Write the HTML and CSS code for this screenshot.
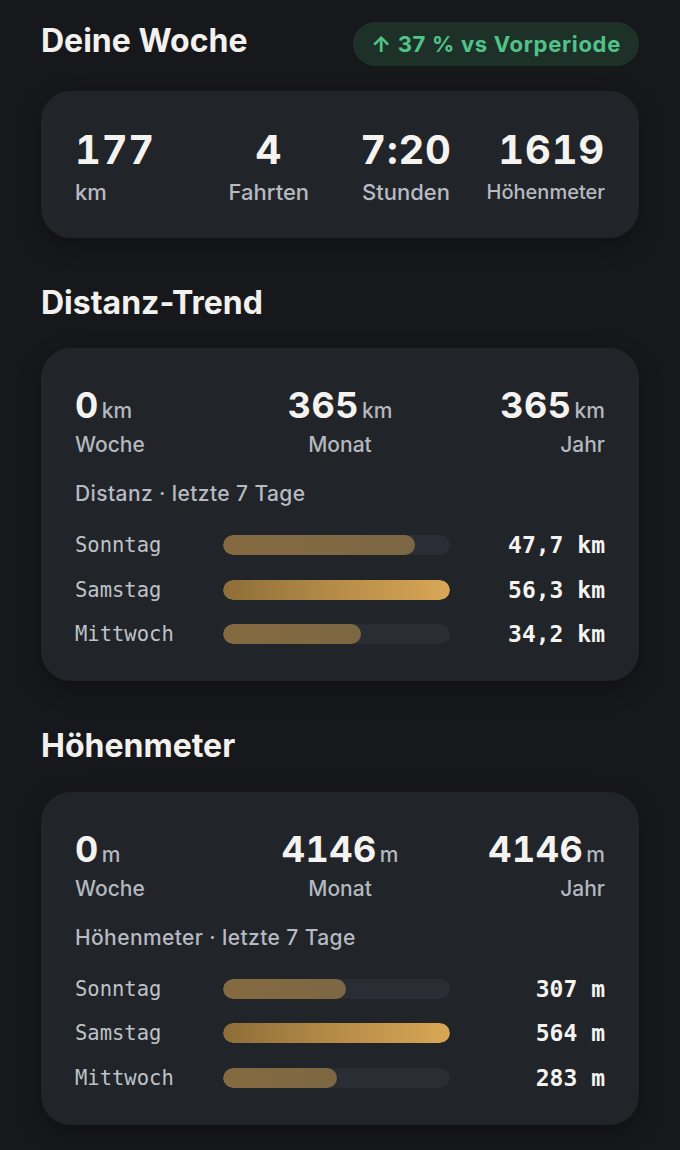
FILE: index.html
```html
<!DOCTYPE html>
<html lang="de">
<head>
    <meta charset="UTF-8">
    <meta name="viewport" content="width=device-width, initial-scale=1.0">
    <title>Statistik</title>
    <link rel="stylesheet" href="styles.css">
</head>
<body>
    <main class="page">
        <!-- Wochenübersicht -->
        <div class="section-head">
            <h2>Deine Woche</h2>
            <span class="trend-badge">↑ 37 % vs Vorperiode</span>
        </div>
        <div class="card week-card">
            <div class="week-stat">
                <div class="big">177</div>
                <div class="caption">km</div>
            </div>
            <div class="week-stat">
                <div class="big">4</div>
                <div class="caption">Fahrten</div>
            </div>
            <div class="week-stat">
                <div class="big">7:20</div>
                <div class="caption">Stunden</div>
            </div>
            <div class="week-stat">
                <div class="big">1619</div>
                <div class="caption small">Höhenmeter</div>
            </div>
        </div>

        <!-- Distanz -->
        <h2 class="section-title">Distanz-Trend</h2>
        <div class="card">
            <div class="totals">
                <div class="total">
                    <div class="total-value">0<span class="unit">km</span></div>
                    <div class="total-label">Woche</div>
                </div>
                <div class="total">
                    <div class="total-value">365<span class="unit">km</span></div>
                    <div class="total-label">Monat</div>
                </div>
                <div class="total">
                    <div class="total-value">365<span class="unit">km</span></div>
                    <div class="total-label">Jahr</div>
                </div>
            </div>
            <div class="chart-title">Distanz · letzte 7 Tage</div>
            <div class="bars">
                <div class="bar-row">
                    <span class="day">Sonntag</span>
                    <div class="track"><div class="fill" style="width: 84.7%"></div></div>
                    <span class="amount">47,7 km</span>
                </div>
                <div class="bar-row">
                    <span class="day">Samstag</span>
                    <div class="track"><div class="fill top" style="width: 100%"></div></div>
                    <span class="amount">56,3 km</span>
                </div>
                <div class="bar-row">
                    <span class="day">Mittwoch</span>
                    <div class="track"><div class="fill" style="width: 60.7%"></div></div>
                    <span class="amount">34,2 km</span>
                </div>
            </div>
        </div>

        <!-- Höhenmeter -->
        <h2 class="section-title">Höhenmeter</h2>
        <div class="card">
            <div class="totals">
                <div class="total">
                    <div class="total-value">0<span class="unit">m</span></div>
                    <div class="total-label">Woche</div>
                </div>
                <div class="total">
                    <div class="total-value">4146<span class="unit">m</span></div>
                    <div class="total-label">Monat</div>
                </div>
                <div class="total">
                    <div class="total-value">4146<span class="unit">m</span></div>
                    <div class="total-label">Jahr</div>
                </div>
            </div>
            <div class="chart-title">Höhenmeter · letzte 7 Tage</div>
            <div class="bars">
                <div class="bar-row">
                    <span class="day">Sonntag</span>
                    <div class="track"><div class="fill" style="width: 54.4%"></div></div>
                    <span class="amount">307 m</span>
                </div>
                <div class="bar-row">
                    <span class="day">Samstag</span>
                    <div class="track"><div class="fill top" style="width: 100%"></div></div>
                    <span class="amount">564 m</span>
                </div>
                <div class="bar-row">
                    <span class="day">Mittwoch</span>
                    <div class="track"><div class="fill" style="width: 50.2%"></div></div>
                    <span class="amount">283 m</span>
                </div>
            </div>
        </div>
    </main>
</body>
</html>
```

FILE: styles.css
```css
body {
    margin: 0;
    background: #16181c;
    color: #f2f1ee;
    font-family: 'Inter', 'Noto Sans', sans-serif;
}

.page {
    padding: 22px 41px 30px;
}

h2 {
    margin: 0;
    font-size: 32px;
    line-height: 1.2;
    font-weight: 700;
    color: #f2f1ee;
}

.section-head {
    display: flex;
    justify-content: space-between;
    align-items: baseline;
    margin-bottom: 25px;
}

.trend-badge {
    padding: 9px 18px;
    border-radius: 22px;
    background: #1d3128;
    color: #52c388;
    font-size: 22px;
    line-height: 26px;
    font-weight: 700;
    letter-spacing: 0.7px;
}

.section-title {
    margin-top: 46px;
    margin-bottom: 26px;
}

.card {
    background: #212429;
    border-radius: 30px;
    padding: 36px 34px 33px;
    box-shadow: 0 8px 24px rgba(0, 0, 0, 0.3);
}

/* Wochenwerte */
.week-card {
    display: grid;
    grid-template-columns: repeat(4, 1fr);
    column-gap: 24px;
    padding-top: 35px;
    padding-bottom: 33px;
}

.week-stat {
    text-align: center;
}

.week-stat:first-child {
    text-align: left;
}

.week-stat:last-child {
    text-align: right;
}

.big {
    font-size: 40px;
    line-height: 48px;
    font-weight: 700;
    font-variant-numeric: tabular-nums;
    letter-spacing: 0.8px;
    color: #f4f3ef;
}

.caption {
    margin-top: 5px;
    font-size: 22px;
    line-height: 26px;
    font-weight: 500;
    color: #b7bac1;
    white-space: nowrap;
}

.caption.small {
    font-size: 20px;
}

/* Summen Woche / Monat / Jahr */
.totals {
    display: grid;
    grid-template-columns: 1fr auto 1fr;
}

.total:nth-child(2) {
    text-align: center;
}

.total:last-child {
    text-align: right;
}

.total-value {
    font-size: 36px;
    line-height: 43px;
    font-weight: 700;
    font-variant-numeric: tabular-nums;
    letter-spacing: 0.5px;
    color: #f4f3ef;
}

.unit {
    margin-left: 3px;
    font-size: 21px;
    font-weight: 500;
    letter-spacing: 0;
    color: #b4b8bf;
}

.total-label {
    margin-top: 0;
    font-size: 21px;
    line-height: 25px;
    font-weight: 500;
    color: #b4b8bf;
}

.chart-title {
    margin-top: 25px;
    font-size: 21px;
    line-height: 24px;
    font-weight: 500;
    letter-spacing: 0.4px;
    color: #b7bac1;
}

/* Balken */
.bars {
    display: flex;
    flex-direction: column;
    gap: 16.5px;
    margin-top: 25px;
}

.bar-row {
    display: grid;
    grid-template-columns: 148px 227px 1fr;
    align-items: center;
    height: 28px;
}

.day {
    font-family: 'DejaVu Sans Mono', 'Liberation Mono', monospace;
    font-size: 20.5px;
    color: #bfc2c7;
}

.track {
    height: 20px;
    border-radius: 10px;
    background: #2a2d33;
    overflow: hidden;
}

.fill {
    height: 100%;
    border-radius: 10px;
    background: linear-gradient(90deg, #856a40, #7c6744);
}

.fill.top {
    background: linear-gradient(90deg, #8d6e38, #b68c48 50%, #d9a755);
}

.amount {
    text-align: right;
    font-family: 'DejaVu Sans Mono', 'Liberation Mono', monospace;
    font-size: 23px;
    font-weight: 700;
    color: #f4f3ef;
}
```
